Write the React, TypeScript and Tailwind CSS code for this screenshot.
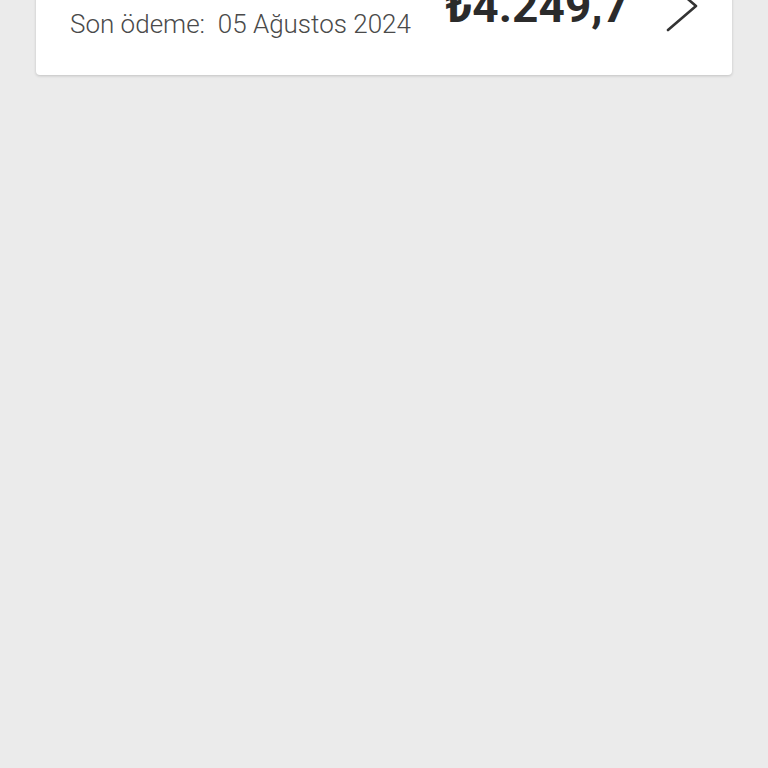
import React from "react";

export default function App() {
  return (
    <div className="h-[768px] w-full overflow-hidden bg-[#ebebeb]" style={{ fontFamily: "Roboto, 'Noto Sans', sans-serif" }}>
      <div className="mx-[36px] -mt-[53px] rounded-[4px] bg-white shadow-[0_1px_3px_rgba(0,0,0,0.18)] pl-[34px] pr-[34px] pt-[20px] pb-[34px] flex items-start justify-between">
        <div className="flex flex-col">
          <div className="text-[26px] leading-[40px] text-[#333] font-normal">Son fatura tutarı</div>
          <div className="text-[26px] leading-[34px] font-light text-[#4a4a4a] whitespace-pre">Son ödeme:  05 Ağustos 2024</div>
        </div>
        <div className="flex items-start gap-[35px]">
          <div className="text-[46px] leading-[50px] font-bold text-[#2b2b2b] mt-[14px]">₺4.249,7</div>
          <svg width="34" height="52" viewBox="0 0 34 52" className="mt-[13px]">
            <polyline points="4,2 32,26 4,50" fill="none" stroke="#333" strokeWidth="2.6" strokeLinecap="round" strokeLinejoin="round" />
          </svg>
        </div>
      </div>
    </div>
  );
}
